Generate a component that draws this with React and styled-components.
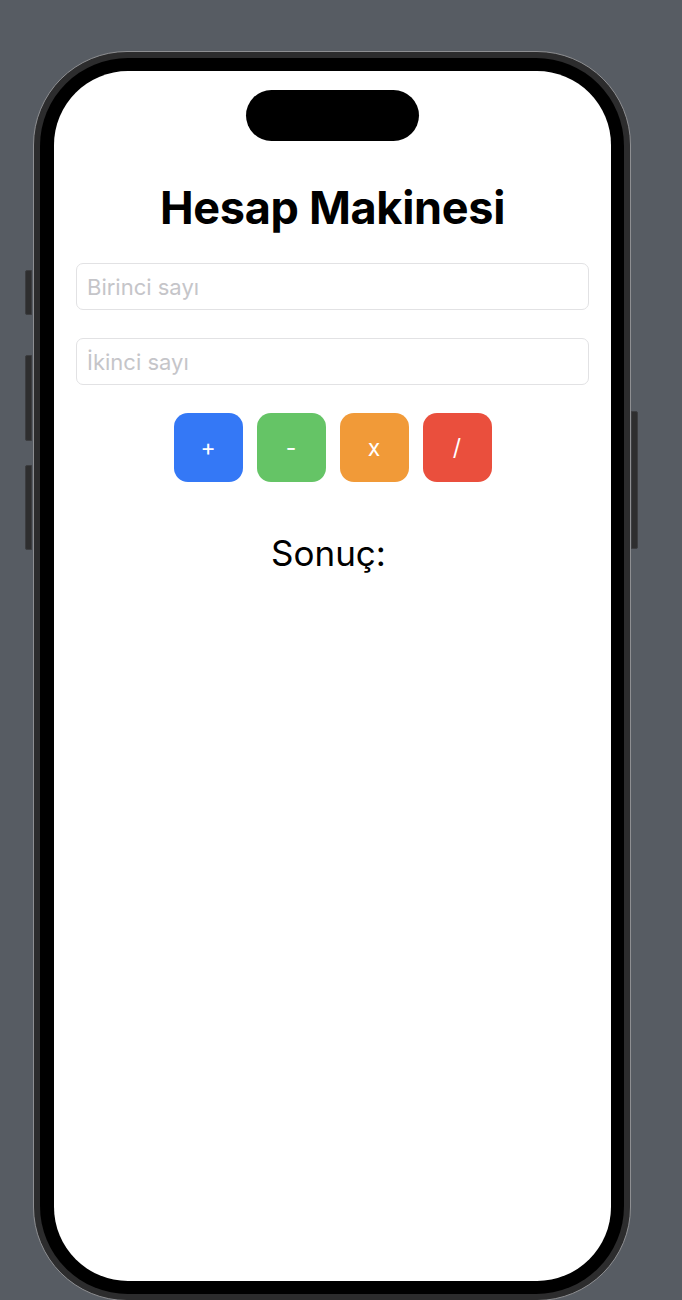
import React from 'react'
import styled, { createGlobalStyle } from 'styled-components'

const GlobalStyle = createGlobalStyle`
  html, body {
    margin: 0;
    padding: 0;
    background: #575c63;
    font-family: Inter, 'Liberation Sans', sans-serif;
  }
  body {
    height: 1300px;
    overflow: hidden;
  }
`

const Stage = styled.div`
  padding: 51px 0 0 33px;
`

const Phone = styled.div`
  position: relative;
  width: 598px;
  height: 1250px;
  box-sizing: border-box;
  border: 1px solid #8e8f92;
  border-radius: 94px;
  background: #2c2c2d;
  padding: 6px;
`

const SideButton = styled.div`
  position: absolute;
  top: ${({ top }) => top}px;
  height: ${({ height }) => height}px;
  width: 7px;
  background: #2e2e2f;
  border: 1px solid #3c3d40;
  box-sizing: border-box;
  ${({ right }) => (right ? 'right: -8px; border-radius: 0 2px 2px 0;' : 'left: -9px; border-radius: 2px 0 0 2px;')}
`

const Bezel = styled.div`
  height: 100%;
  box-sizing: border-box;
  background: #000;
  border-radius: 88px;
  padding: 13px 13px 13px 14px;
`

const Screen = styled.div`
  height: 100%;
  background: #fff;
  border-radius: 74px;
  display: flex;
  flex-direction: column;
  align-items: center;
  padding: 19px 22px 0;
  box-sizing: border-box;
`

const Island = styled.div`
  width: 173px;
  height: 51px;
  border-radius: 26px;
  background: #000;
`

const Title = styled.h1`
  margin: 41px 0 0;
  font-size: 45px;
  line-height: 52px;
  font-weight: 700;
  color: #000;
  letter-spacing: -0.3px;
`

const Input = styled.input`
  width: 100%;
  height: 47px;
  box-sizing: border-box;
  margin-top: ${({ gap }) => gap}px;
  border: 1px solid #e2e2e4;
  border-radius: 7px;
  padding: 0 10px;
  font-family: Inter, 'Liberation Sans', sans-serif;
  font-size: 22px;
  color: #000;
  background: #fff;
  outline: none;

  &::placeholder {
    color: #c5c5c9;
  }
`

const ButtonRow = styled.div`
  display: flex;
  gap: 14px;
  margin-top: 28px;
`

const OpButton = styled.button`
  width: 69px;
  height: 69px;
  border: none;
  border-radius: 14px;
  background: ${({ color }) => color};
  color: #fff;
  font-family: Inter, 'Liberation Sans', sans-serif;
  font-size: 23px;
  display: flex;
  align-items: center;
  justify-content: center;
  padding: 0;
`

const Result = styled.div`
  margin: 51px 8px 0 0;
  font-size: 35px;
  line-height: 41px;
  color: #000;
`

const ops = [
  { label: '+', color: '#3478f6' },
  { label: '-', color: '#65c466' },
  { label: 'x', color: '#f19a38' },
  { label: '/', color: '#ea4f3d' },
]

export default function App() {
  return (
    <>
      <GlobalStyle />
      <Stage>
        <Phone>
          <SideButton top={218} height={45} />
          <SideButton top={303} height={86} />
          <SideButton top={413} height={85} />
          <SideButton right top={359} height={138} />
          <Bezel>
            <Screen>
              <Island />
              <Title>Hesap Makinesi</Title>
              <Input gap={29} placeholder="Birinci sayı" />
              <Input gap={28} placeholder="İkinci sayı" />
              <ButtonRow>
                {ops.map((op) => (
                  <OpButton key={op.label} color={op.color}>
                    {op.label}
                  </OpButton>
                ))}
              </ButtonRow>
              <Result>Sonuç:</Result>
            </Screen>
          </Bezel>
        </Phone>
      </Stage>
    </>
  )
}
